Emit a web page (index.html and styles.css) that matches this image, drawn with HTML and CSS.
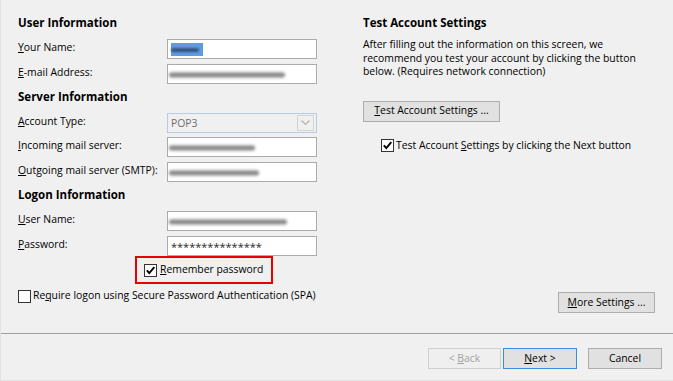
FILE: index.html
```html
<!DOCTYPE html>
<html>
<head>
<meta charset="utf-8">
<link rel="stylesheet" href="styles.css">
</head>
<body>
<div class="dialog">
  <div class="content">
    <div class="col-left">
      <div class="heading">User Information</div>
      <div class="row">
        <span class="label"><u>Y</u>our Name:</span>
        <div class="field"><span class="sel"><span class="smudge s-name"></span></span></div>
      </div>
      <div class="row">
        <span class="label"><u>E</u>-mail Address:</span>
        <div class="field"><span class="smudge s-email"></span></div>
      </div>
      <div class="heading">Server Information</div>
      <div class="row row-tight">
        <span class="label"><u>A</u>ccount Type:</span>
        <div class="combo">
          <span class="combo-text">POP3</span>
          <span class="combo-btn">
            <svg width="9" height="6" viewBox="0 0 9 6"><path d="M0.5 0.5 L4.5 4.5 L8.5 0.5" fill="none" stroke="#b4b4b4" stroke-width="1.2"/></svg>
          </span>
        </div>
      </div>
      <div class="row">
        <span class="label"><u>I</u>ncoming mail server:</span>
        <div class="field"><span class="smudge s-in"></span></div>
      </div>
      <div class="row">
        <span class="label"><u>O</u>utgoing mail server (SMTP):</span>
        <div class="field"><span class="smudge s-out"></span></div>
      </div>
      <div class="heading">Logon Information</div>
      <div class="row">
        <span class="label"><u>U</u>ser Name:</span>
        <div class="field"><span class="smudge s-user"></span></div>
      </div>
      <div class="row row-last">
        <span class="label"><u>P</u>assword:</span>
        <div class="field"><span class="pw">***************</span></div>
      </div>
      <div class="highlight">
        <span class="cb"><svg width="11" height="11" viewBox="0 0 11 11"><path d="M1.8 5.4 L4.3 8 L9.3 2.2" fill="none" stroke="#000" stroke-width="1.9"/></svg></span>
        <span class="cb-label"><u>R</u>emember password</span>
      </div>
      <div class="check-row spa">
        <span class="cb"></span>
        <span class="cb-label">Re<u>q</u>uire logon using Secure Password Authentication (SPA)</span>
      </div>
    </div>
    <div class="col-right">
      <div class="heading">Test Account Settings</div>
      <p class="desc">After filling out the information on this screen, we recommend you test your account by clicking the button below. (Requires network connection)</p>
      <button class="btn btn-test"><span><u>T</u>est Account Settings ...</span></button>
      <div class="check-row test-check">
        <span class="cb"><svg width="11" height="11" viewBox="0 0 11 11"><path d="M1.8 5.4 L4.3 8 L9.3 2.2" fill="none" stroke="#000" stroke-width="1.9"/></svg></span>
        <span class="cb-label">Test Account <u>S</u>ettings by clicking the Next button</span>
      </div>
      <button class="btn btn-more"><span><u>M</u>ore Settings ...</span></button>
    </div>
  </div>
  <div class="separator"></div>
  <div class="footer">
    <button class="btn btn-nav btn-back" disabled><span>&lt; <u>B</u>ack</span></button>
    <button class="btn btn-nav btn-next"><span><u>N</u>ext &gt;</span></button>
    <button class="btn btn-nav btn-cancel"><span>Cancel</span></button>
  </div>
</div>
</body>
</html>
```
FILE: styles.css
```css
html, body {
  margin: 0;
  padding: 0;
}
body {
  background: #f0f0f0;
  font-family: "Open Sans", "Noto Sans", sans-serif;
  font-size: 10.4px;
  color: #000;
}
u {
  text-decoration: underline;
  text-underline-offset: 1px;
}
.dialog {
  width: 673px;
  height: 381px;
  box-sizing: border-box;
  border-left: 1px solid #e2e2e2;
  border-bottom: 1px solid #e2e2e2;
  display: flex;
  flex-direction: column;
}
.content {
  height: 333px;
  box-sizing: border-box;
  display: flex;
  padding: 0 18px 0 17px;
  flex: none;
}
.col-left {
  width: 299px;
  padding-top: 15px;
}
.heading {
  font-weight: bold;
  font-size: 11.5px;
  height: 16px;
  line-height: 16px;
  white-space: nowrap;
}
.col-left .heading {
  margin-bottom: 8px;
}
.row {
  display: grid;
  grid-template-columns: 149px 150px;
  align-items: center;
  height: 20px;
  margin-bottom: 5px;
}
.row-tight {
  margin-bottom: 4px;
}
.row-last {
  margin-bottom: 0;
}
.label {
  white-space: nowrap;
  line-height: 16px;
  margin-top: -5px;
}
.field {
  height: 20px;
  box-sizing: border-box;
  border: 1px solid #ababab;
  background: #fff;
  display: flex;
  align-items: center;
  padding-left: 1px;
  overflow: hidden;
}
.smudge {
  display: block;
  height: 6px;
  margin-top: 1px;
  border-radius: 3px;
  background: linear-gradient(180deg, #b8b8b8 0%, #7a7a7a 45%, #8c8c8c 70%, #c4c4c4 100%);
  filter: blur(1.4px);
}
.sel {
  display: flex;
  align-items: center;
  width: 32px;
  height: 13px;
  margin-left: 2px;
  background: #5d9ce2;
  filter: blur(0.7px);
}
.s-name {
  width: 28px;
  height: 4px;
  background: #37527c;
  filter: blur(1px);
}
.s-email { width: 116px; }
.s-in { width: 86px; }
.s-out { width: 90px; }
.s-user { width: 118px; }
.pw {
  font-size: 11px;
  line-height: 14px;
  padding-left: 2px;
  color: #2a2a2a;
  margin-top: 2px;
}
.combo {
  height: 20px;
  box-sizing: border-box;
  border: 1px solid #b5cce6;
  background: #f0f0f0;
  display: flex;
  align-items: center;
  justify-content: space-between;
  padding: 0 2px 0 3px;
}
.combo-text {
  color: #6d6d6d;
  margin-top: -1px;
}
.combo-btn {
  width: 17px;
  height: 16px;
  box-sizing: border-box;
  border: 1px solid #d4d4d4;
  display: flex;
  align-items: center;
  justify-content: center;
}
.highlight {
  display: inline-flex;
  align-items: center;
  box-sizing: border-box;
  width: 138px;
  height: 28px;
  margin-left: 117px;
  border: 2px solid #e60000;
  padding-left: 7px;
  gap: 3px;
  vertical-align: top;
}
.cb {
  width: 13px;
  height: 13px;
  box-sizing: border-box;
  border: 1px solid #333;
  background: #fff;
  display: flex;
  align-items: center;
  justify-content: center;
  flex: none;
}
.cb-label {
  white-space: nowrap;
  line-height: 16px;
  margin-top: -2px;
}
.check-row {
  display: flex;
  align-items: center;
  gap: 2px;
}
.spa {
  margin-top: 5px;
}
.col-right {
  flex: 1;
  margin-left: 46px;
  padding-top: 15px;
  padding-bottom: 20px;
  display: flex;
  flex-direction: column;
  align-items: flex-start;
}
.desc {
  margin: 7px 0 22px 0;
  line-height: 13.5px;
  width: 275px;
}
.btn {
  font-family: inherit;
  font-size: 10.4px;
  color: #000;
  background: #e1e1e1;
  border: 1px solid #adadad;
  height: 21px;
  box-sizing: border-box;
  padding: 0 0 2px 0;
  margin: 0;
  display: flex;
  align-items: center;
  justify-content: center;
  white-space: nowrap;
}
.btn-test {
  width: 137px;
}
.test-check {
  margin-top: 17px;
  margin-left: 18px;
}
.btn-more {
  width: 97px;
  margin-top: auto;
  align-self: flex-end;
}
.separator {
  height: 1px;
  background: #a0a0a0;
  flex: none;
}
.footer {
  display: flex;
  justify-content: flex-end;
  padding: 14px 11px 0 0;
}
.btn-nav {
  width: 74px;
}
.btn-back {
  width: 73px;
  margin-right: 2px;
  background: #efefef;
  border-color: #cfcfcf;
  color: #a2a2a2;
}
.btn-next {
  margin-right: 11px;
  border-color: #3c8ddc;
}
```
